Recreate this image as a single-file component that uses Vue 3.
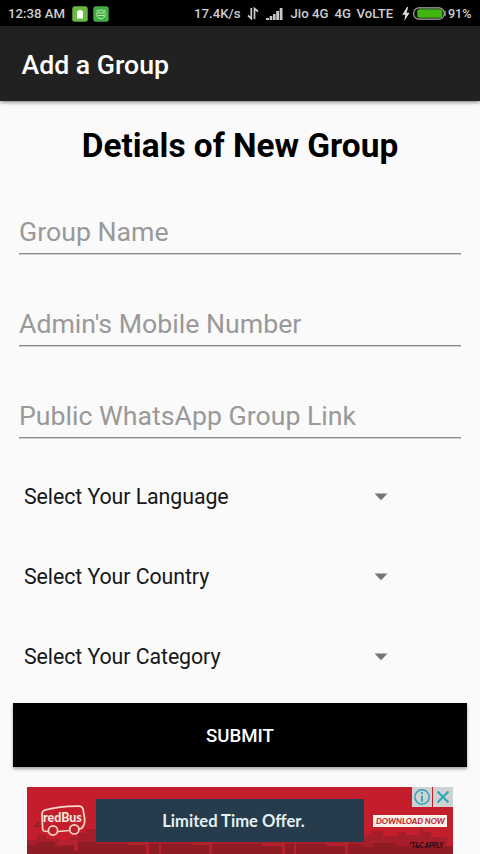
<script setup>
const fields = ['Group Name', "Admin's Mobile Number", 'Public WhatsApp Group Link']
const selects = ['Select Your Language', 'Select Your Country', 'Select Your Category']
</script>

<template>
  <div class="screen">
    <header class="status">
      <span class="time">12:38 AM</span>
      <svg class="chip" width="16" height="16" viewBox="0 0 16 16">
        <rect x=".3" y=".3" width="15.4" height="15.4" rx="2.5" fill="#69b944" />
        <path d="M5 5h1.5V4h3v1H11v7.5H5z" fill="#fbfff2" />
      </svg>
      <svg class="chip second" width="16" height="16" viewBox="0 0 16 16">
        <rect x=".3" y=".3" width="15.4" height="15.4" rx="2.5" fill="#43ad45" />
        <g fill="none" stroke="#b7edaa" stroke-width="1">
          <circle cx="8" cy="8.4" r="4.3" />
          <path d="M5 7h6M5 9.5h6M3.8 4l1.5 1M12.2 4l-1.5 1" />
        </g>
      </svg>
      <span class="speed">17.4K/s</span>
      <svg class="arrows" width="12" height="13" viewBox="0 0 12 13">
        <path d="M4.3 1v10.5L1 8.5M7.5 12V1.5L11 4.5" fill="none" stroke="#ccc" stroke-width="1.7" />
      </svg>
      <svg class="signal" width="17" height="12" viewBox="0 0 17 12">
        <path d="M0 12v-2h3v2zM3.7 12V8h2.6v4zM7 12V6h2.6v6zM10.2 12V3h2.8v9zM13.7 12V0h2.8v12z" fill="#c8c8c8" />
      </svg>
      <span class="carrier">Jio 4G</span>
      <span class="net">4G</span>
      <span class="volte">VoLTE</span>
      <svg class="bolt" width="8" height="14" viewBox="0 0 8 14">
        <path d="M5 0L.3 7.8h3L2.3 14 7.6 5.8H4.5L6.3 0z" fill="#ddd" />
      </svg>
      <svg class="battery" width="33" height="13" viewBox="0 0 33 13">
        <rect x=".7" y=".9" width="30.5" height="11.2" rx="5" fill="#071500" stroke="#aaa" stroke-width="1.1" />
        <path d="M32 4v5" stroke="#aaa" stroke-width="1.4" />
        <rect x="4.3" y="2.3" width="25" height="8.4" rx="2" fill="#43b512" />
      </svg>
      <span class="percent">91%</span>
    </header>

    <div class="appbar"><span>Add a Group</span></div>

    <main>
      <h1><span>Detials of New Group</span></h1>
      <div v-for="field in fields" :key="field" class="field"><span>{{ field }}</span></div>
      <div class="selects">
        <div v-for="item in selects" :key="item" class="select">
          <span>{{ item }}</span>
          <svg width="14" height="8" viewBox="0 0 14 8"><path d="M.5.5h13L7 7.2z" fill="#737373" /></svg>
        </div>
      </div>
      <button type="button">SUBMIT</button>
    </main>

    <footer class="ad">
      <svg class="skyline" width="426" height="67" viewBox="0 0 426 67">
        <path d="M0 53h10v-5h9v4h14v5h10v-6h8v-5h8v-4h10v7h270v-2h5v-3h12v5h14v-4h9v3h14V37h3v8h8v5h16v17H0z" fill="#a51e29" />
        <path d="M0 58h10v-3h18v4h13v-4h28v2h267v3h10v-4h22v3h58v8H0z" fill="#8f1c25" />
        <path d="M31 53h16v5H31zM47 53h4v11h-4zM101 54h18v4h-18zM119 54h3v13h-3zM132 54h2v13h-2zM166 54h16v4h-16zM182 54h3v13h-3zM235 56h20v3h-20zM255 54h3v13h-3zM267 54h2v13h-2zM300 56h18v3h-18zM318 54h3v13h-3z" fill="#b4222e" />
        <path d="M6 38h3v-3h3v3h2v2H6z" fill="#9d1d27" />
      </svg>
      <div class="logo">
        <svg width="48" height="32" viewBox="0 0 48 32">
          <g fill="none" stroke="#f7d9c9" stroke-width="1.7" stroke-linecap="round" stroke-linejoin="round">
            <path d="M7.5 26.5L3.8 26C3 25.8 2.8 25 2.7 24L2 9Q2 6 5 5Q20 1 39 1.2Q42 1.2 43 4L44.7 14Q45 21 41 23.5L39.5 24M18.5 26.5L29 25.5" />
            <circle cx="13" cy="25.5" r="4.6" />
            <circle cx="34.3" cy="24.4" r="4.6" />
          </g>
        </svg>
        <b>redBus</b>
      </div>
      <div class="offer">Limited Time Offer.</div>
      <div class="cta"><span>DOWNLOAD NOW</span></div>
      <div class="terms"><span>*T&amp;C APPLY</span></div>
      <svg class="choices" width="41" height="20" viewBox="0 0 41 20">
        <path d="M0 0h20v20H0zM21 0h20v20H21z" fill="#cfd2d2" />
        <circle cx="10" cy="10" r="7.2" fill="none" stroke="#2ba5b7" stroke-width="1.5" />
        <path d="M10 8.7v6M10 5v2M25.5 4.5l11 11M36.5 4.5l-11 11" fill="none" stroke="#2ba5b7" stroke-width="1.9" />
      </svg>
    </footer>
  </div>
</template>

<style>
body { margin: 0; background: #fafafa; }
</style>

<style scoped>
.screen {
  width: 480px; height: 854px; overflow: hidden; background: #fafafa;
  font-family: Roboto, "Liberation Sans", sans-serif; display: flex; flex-direction: column;
}
.screen span, .offer, button, .logo b { white-space: nowrap; }
.screen svg { display: block; flex: none; }
.status {
  height: 26px; flex: none; background: #000; color: #cecece; display: flex; align-items: center;
  padding: 1px 0 0 8px; box-sizing: border-box; font-size: 13.2px; font-weight: 500;
}
.status span { flex: none; }
.time { width: 64px; }
.second { margin-left: 5px; }
.speed { margin-left: 85px; width: 53px; }
.signal { margin-left: 7px; }
.carrier { margin-left: 7.5px; width: 44px; }
.net { width: 22px; }
.volte { width: 45px; }
.battery { margin-left: 3px; }
.percent { margin-left: 2.5px; font-size: 12.5px; }
.appbar {
  height: 75px; flex: none; background: #212121; color: #fff; display: flex; align-items: center;
  padding: 3px 0 0 21.5px; box-sizing: border-box; font-size: 26.67px; font-weight: 500;
  box-shadow: 0 1px 4px rgba(0,0,0,.55);
}
main { display: flex; flex-direction: column; height: 686px; flex: none; }
h1 { margin: 23px 0 0; height: 44px; line-height: 44px; text-align: center; font-size: 33.4px; font-weight: 700; color: #000; }
.field {
  margin: 0 19px; height: 92px; flex: none; box-sizing: border-box; display: flex; align-items: flex-end;
  border-bottom: 1px solid #cfcfcf; padding-bottom: 6px; font-size: 26.7px; line-height: 31px; color: #999;
  box-shadow: inset 0 -1px 0 #8c8c8c;
}
h1 + .field { height: 87px; }
.selects { margin-top: 18px; padding-left: 24px; }
.select {
  width: 364px; height: 80px; display: flex; justify-content: space-between; align-items: center;
  font-size: 21.33px; color: #171717; letter-spacing: -.07px;
}
.select span { padding-bottom: 2px; }
button {
  margin: 6px 13px 0; height: 64px; flex: none; border: 0; padding: 1px 0 0; background: #000; color: #fff;
  font: 500 18.67px Roboto, sans-serif; box-shadow: 0 2px 3px rgba(0,0,0,.35);
}
.ad {
  position: relative; margin: 0 27px; height: 67px; flex: none; background: #c41e2c;
  display: flex; align-items: flex-start; overflow: hidden;
}
.skyline, .logo b, .choices, .terms { position: absolute; }
.skyline { left: 0; top: 0; }
.logo { position: relative; margin: 18px 0 0 13px; width: 48px; height: 32px; }
.logo b { left: 3px; top: 5px; font: 900 12.4px/15px Lato, sans-serif; color: #f9e8dc; }
.offer {
  position: relative; margin: 12px 0 0 8px; width: 268px; height: 43px; background: #263c4c;
  color: #e3f0f5; font: 700 16.6px/44px Lato, sans-serif; text-align: center; padding-left: 7px; box-sizing: border-box;
}
.cta {
  position: relative; margin: 28px 0 0 9px; width: 74px; height: 12px; background: #fcf0e9; color: #bc2630;
  display: flex; justify-content: center; align-items: center; font: italic 900 8px/12px Lato, sans-serif;
}
.cta span { transform: scale(1.03, .85); }
.terms { left: 382px; top: 54px; font: italic 900 6.5px/9px Lato, sans-serif; color: #2d080d; }
.choices { right: 0; top: 0; }
</style>
